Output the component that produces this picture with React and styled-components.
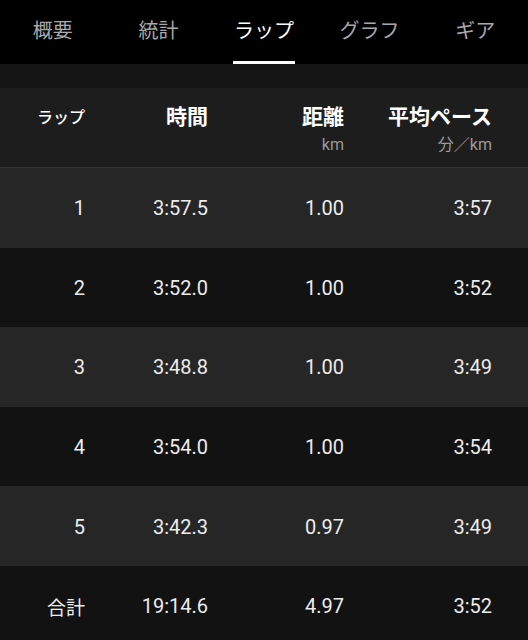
import styled, { createGlobalStyle } from 'styled-components'

const GlobalStyle = createGlobalStyle`
  html, body {
    margin: 0;
    padding: 0;
    background: #121212;
  }
  body {
    font-family: Roboto, "Noto Sans CJK JP", sans-serif;
    -webkit-font-smoothing: antialiased;
  }
`

const Page = styled.div`
  width: 528px;
  height: 640px;
  overflow: hidden;
  background: #121212;
`

const TabBar = styled.nav`
  display: grid;
  grid-template-columns: repeat(5, 1fr);
  height: 64px;
  background: #000;
`

const Tab = styled.div`
  position: relative;
  display: flex;
  align-items: center;
  justify-content: center;
  padding-bottom: 6px;
  font-family: "Noto Sans CJK JP", sans-serif;
  font-size: 20px;
  color: ${(p) => (p.$active ? '#fff' : '#a8a8a8')};

  &::after {
    content: '';
    display: ${(p) => (p.$active ? 'block' : 'none')};
    position: absolute;
    bottom: 0;
    left: 50%;
    width: 62px;
    height: 3px;
    margin-left: -31px;
    background: #fff;
  }
`

const Spacer = styled.div`
  height: 24px;
  background: #151515;
`

const columns = `
  display: grid;
  grid-template-columns: 85px 123px 136px 148px;
  padding-right: 36px;
  text-align: right;
`

const HeaderRow = styled.div`
  ${columns}
  height: 79px;
  align-items: start;
  background: #1d1d1d;
  border-bottom: 1px solid #343434;
  font-family: "Noto Sans CJK JP", sans-serif;
`

const HeadCell = styled.div`
  display: flex;
  flex-direction: column;
  align-items: flex-end;
  padding-top: ${(p) => (p.$small ? '18px' : '12px')};
`

const HeadTitle = styled.span`
  color: #fff;
  font-size: ${(p) => (p.$small ? '16px' : '21px')};
  font-weight: ${(p) => (p.$small ? 500 : 700)};
  line-height: ${(p) => (p.$small ? '20px' : '30px')};
`

const Unit = styled.span`
  color: #9a9a9a;
  font-size: 16px;
  line-height: 20px;
  margin-top: 5px;
  font-family: Roboto, "Noto Sans CJK JP", sans-serif;
`

const Row = styled.div`
  ${columns}
  height: 79.6px;
  align-items: center;
  background: ${(p) => (p.$shade ? '#262626' : '#121212')};
  color: #ececec;
  font-size: 20px;
`

const Cell = styled.div`
  font-family: Roboto, "Noto Sans CJK JP", sans-serif;
  padding-top: 1px;
`

const LabelCell = styled(Cell)`
  font-family: "Noto Sans CJK JP", sans-serif;
  font-size: 19px;
`

const tabs = ['概要', '統計', 'ラップ', 'グラフ', 'ギア']

const laps = [
  ['1', '3:57.5', '1.00', '3:57'],
  ['2', '3:52.0', '1.00', '3:52'],
  ['3', '3:48.8', '1.00', '3:49'],
  ['4', '3:54.0', '1.00', '3:54'],
  ['5', '3:42.3', '0.97', '3:49'],
]

function App() {
  return (
    <Page>
      <GlobalStyle />
      <TabBar>
        {tabs.map((t) => (
          <Tab key={t} $active={t === 'ラップ'}>
            {t}
          </Tab>
        ))}
      </TabBar>
      <Spacer />
      <HeaderRow>
        <HeadCell $small>
          <HeadTitle $small>ラップ</HeadTitle>
        </HeadCell>
        <HeadCell>
          <HeadTitle>時間</HeadTitle>
        </HeadCell>
        <HeadCell>
          <HeadTitle>距離</HeadTitle>
          <Unit>km</Unit>
        </HeadCell>
        <HeadCell>
          <HeadTitle>平均ペース</HeadTitle>
          <Unit>分／km</Unit>
        </HeadCell>
      </HeaderRow>
      {laps.map((lap, i) => (
        <Row key={lap[0]} $shade={i % 2 === 0}>
          {lap.map((v, j) => (
            <Cell key={j}>{v}</Cell>
          ))}
        </Row>
      ))}
      <Row>
        <LabelCell>合計</LabelCell>
        <Cell>19:14.6</Cell>
        <Cell>4.97</Cell>
        <Cell>3:52</Cell>
      </Row>
    </Page>
  )
}

export default App
